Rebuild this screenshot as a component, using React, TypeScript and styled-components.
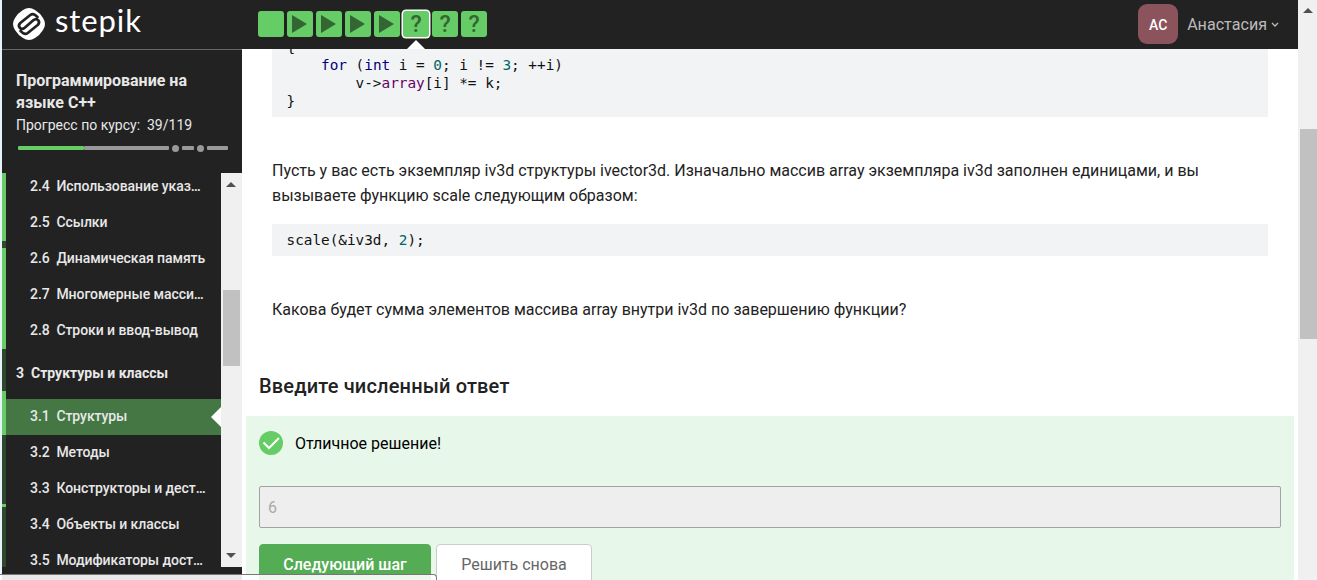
import React from 'react';
import styled, { createGlobalStyle } from 'styled-components';

const Global = createGlobalStyle`
  * { box-sizing: border-box; }
  body { margin: 0; overflow: hidden; font-family: Roboto, "Liberation Sans", sans-serif; color: #222; background: #fff; }
`;

const Page = styled.div`
  display: flex;
  width: 1317px;
  height: 580px;
  overflow: hidden;
  position: relative;
`;
const WindowEdge = styled.div`
  flex: 0 0 2px;
  background: #e9f1f9;
`;
const Shell = styled.div`
  flex: 0 0 1296px;
  display: flex;
  flex-direction: column;
  min-width: 0;
`;
const Header = styled.header`
  flex: 0 0 49px;
  display: flex;
  background: #222;
  padding-right: 19px;
`;
const Brand = styled.div`
  width: 256px;
  padding: 7px 0 0 10px;
  display: flex;
`;
const Wordmark = styled.span`
  font: 400 31px/31px Lato, sans-serif;
  color: #fff;
  margin: -2px 0 0 9px;
  letter-spacing: 0.9px;
`;
const Steps = styled.div`
  display: flex;
  gap: 3px;
  padding-top: 11px;
  flex: 1;
`;
const Step = styled.div<{ $active?: boolean }>`
  position: relative;
  width: 26px;
  height: 26px;
  border-radius: 3px;
  background: #66cc66;
  box-shadow: ${p => (p.$active ? '0 0 0 1.5px #fff' : 'none')};
  color: #336633;
  font: 500 23px/27px Roboto, sans-serif;
  text-align: center;
  svg { display: block; }
`;
const StepPointer = styled.i`
  position: absolute;
  left: 4px;
  top: 29px;
  border: 9px solid transparent;
  border-top: 0;
  border-bottom-color: #fff;
`;
const User = styled.div`
  display: flex;
  align-items: center;
  color: #bbb;
  font-size: 16.1px;
`;
const Avatar = styled.div`
  width: 40px;
  height: 40px;
  border-radius: 9px;
  background: #8b535c;
  color: #fff;
  font: 500 14px/42px Roboto, sans-serif;
  text-align: center;
  margin: -1px 9px 0 0;
`;
const Body = styled.div`
  flex: 1;
  display: flex;
  min-height: 0;
`;
const Sidebar = styled.aside`
  flex: 0 0 240px;
  background: #222;
  border-top: 1px solid #686868;
  color: #e8e8e8;
  display: flex;
  flex-direction: column;
`;
const Course = styled.div`
  flex: 0 0 123px;
  padding: 20px 14px 0;
`;
const CourseTitle = styled.div`
  font-size: 16px;
  font-weight: 700;
  line-height: 22px;
`;
const Progress = styled.div`
  font-size: 14px;
  line-height: 22px;
  white-space: pre;
`;
const Track = styled.div`
  display: flex;
  align-items: center;
  height: 8px;
  margin: 8px 0 0 2px;
`;
const Segment = styled.i<{ $w: number; $gap?: number; $done?: boolean; $dot?: boolean }>`
  width: ${p => p.$w}px;
  height: ${p => (p.$dot ? 7 : 4)}px;
  margin-left: ${p => p.$gap ?? 0}px;
  border-radius: ${p => (p.$dot ? '50%' : '1px')};
  background: ${p => (p.$done ? '#66cc66' : '#999')};
`;
const Contents = styled.div`
  flex: 0 0 394px;
  display: flex;
  overflow: hidden;
`;
const Rail = styled.div`
  flex: 0 0 4px;
  display: flex;
  flex-direction: column;
`;
const RailPart = styled.i<{ $h: number; $done?: boolean }>`
  flex: 0 0 ${p => p.$h}px;
  background: ${p => (p.$done ? '#66cc66' : '#2f472f')};
`;
const Lessons = styled.nav`
  flex: 1;
  margin-top: -4px;
  min-width: 0;
`;
const Lesson = styled.div<{ $active?: boolean }>`
  position: relative;
  height: 36px;
  padding-left: 24px;
  font-size: 14px;
  font-weight: 500;
  line-height: 34px;
  letter-spacing: -0.07px;
  white-space: pre;
  background: ${p => (p.$active ? '#447744' : 'transparent')};
`;
const LessonPointer = styled.i`
  position: absolute;
  right: 0;
  top: 8px;
  border: 10px solid transparent;
  border-left: 0;
  border-right-color: #fff;
`;
const Module = styled.div`
  height: 50px;
  padding-left: 10px;
  font-size: 14px;
  font-weight: 700;
  line-height: 48px;
  white-space: pre;
`;
const ScrollBar = styled.div<{ $w: number }>`
  flex: 0 0 ${p => p.$w}px;
  display: flex;
  flex-direction: column;
  background: #f0f0f0;
`;
const Thumb = styled.i<{ $top: number; $h: number; $right: number }>`
  height: ${p => p.$h}px;
  margin: ${p => p.$top}px ${p => p.$right}px 0 2px;
  background: #c1c1c1;
`;
const ScrollArrow = styled.svg<{ $top: number }>`
  display: block;
  flex: none;
  width: 10px;
  height: 5px;
  margin: ${p => p.$top}px 0 0 5px;
  fill: #505050;
`;
const Main = styled.main`
  flex: 1;
  min-width: 0;
  overflow: hidden;
`;
const Code = styled.pre<{ $first?: boolean }>`
  margin: ${p => (p.$first ? 0 : 16)}px 30px 0;
  padding: 0 14.5px;
  height: ${p => (p.$first ? 68 : 32)}px;
  background: #f2f3f5;
  overflow: hidden;
  color: #111;
  font: 14.35px/18px "DejaVu Sans Mono", monospace;
  > div { margin-top: ${p => (p.$first ? -11 : 7)}px; }
`;
const Keyword = styled.span`color: #000080;`;
const Num = styled.span`color: #006666;`;
const Type = styled.span`color: #660066;`;
const Text = styled.p`
  margin: 41px 30px 0;
  font-size: 16px;
  line-height: 25px;
  white-space: pre;
`;
const Heading = styled.h2`
  margin: 52px 17px 0;
  font-size: 20px;
  font-weight: 500;
  line-height: 24px;
  letter-spacing: 0.17px;
`;
const Answer = styled.section`
  margin: 18px 4px 0;
  height: 170px;
  padding: 15px 13px 0;
  background: #e7f7e9;
`;
const Verdict = styled.div`
  display: flex;
  align-items: center;
  gap: 12px;
  height: 24px;
  font-size: 16px;
  color: #000;
`;
const Field = styled.div`
  height: 42px;
  margin: 31px 0 16px;
  padding-left: 8px;
  border: 1px solid #a3a3a3;
  border-radius: 2px;
  background: #eee;
  color: #aaa;
  font-size: 16px;
  line-height: 41px;
`;
const Buttons = styled.div`
  display: flex;
  gap: 5px;
`;
const Button = styled.div<{ $primary?: boolean }>`
  width: ${p => (p.$primary ? 172 : 156)}px;
  height: 42px;
  border: 1px solid ${p => (p.$primary ? '#54ad54' : '#ccc')};
  border-radius: 4px;
  background: ${p => (p.$primary ? '#54ad54' : '#fff')};
  color: ${p => (p.$primary ? '#fff' : '#666')};
  font-size: 16px;
  font-weight: ${p => (p.$primary ? 500 : 400)};
  line-height: 40px;
  text-align: center;
`;
const StatusBubble = styled.div`
  position: absolute;
  left: 0;
  top: 574px;
  width: 437px;
  height: 10px;
  border: 1px solid #777;
  border-left: 0;
  border-radius: 0 4px 0 0;
  background: rgba(255, 255, 255, 0.9);
`;
const Caret = styled.svg`
  width: 8px;
  height: 6px;
  margin-left: 4px;
`;

const Logo = () => (
  <svg width="34" height="34" viewBox="0 0 34 34">
    <path d="M11 3Q17-1 23 3Q28 6 31 11Q35 17 31 23Q28 28 23 31Q17 35 11 31Q6 28 3 23Q-1 17 3 11Q6 6 11 3Z" fill="#fff" />
    <path
      d="M25.5 10 22.8 7.8Q20.5 6.3 18.3 8L8.3 16Q5.8 18.5 7.8 20.8Q10 23 12.7 20.7L21.3 13.3Q24 11 26.2 13.2Q28.2 15.5 25.7 18L15.7 26Q13.5 27.7 11.2 26.2L8.5 24"
      fill="none" stroke="#222" strokeWidth="2.7" strokeLinecap="round" strokeLinejoin="round"
    />
  </svg>
);
const Play = () => (
  <svg width="26" height="26"><path d="M5 4 20 13 5 22Z" fill="#336633" /></svg>
);

const before = ['2.4  Использование указ…', '2.5  Ссылки', '2.6  Динамическая память', '2.7  Многомерные масси…', '2.8  Строки и ввод-вывод'];
const after = ['3.2  Методы', '3.3  Конструкторы и дест…', '3.4  Объекты и классы', '3.5  Модификаторы дост…'];

export default function App() {
  return (
    <>
      <Global />
      <Page>
        <WindowEdge />
        <Shell>
          <Header>
            <Brand><Logo /><Wordmark>stepik</Wordmark></Brand>
            <Steps>
              <Step />
              {[0, 1, 2, 3].map(i => <Step key={i}><Play /></Step>)}
              <Step $active>?<StepPointer /></Step>
              <Step>?</Step>
              <Step>?</Step>
            </Steps>
            <User>
              <Avatar>АС</Avatar>Анастасия
              <Caret><path d="M1 1 4 4 7 1" fill="none" stroke="#bbb" strokeWidth="1.3" /></Caret>
            </User>
          </Header>
          <Body>
            <Sidebar>
              <Course>
                <CourseTitle>Программирование на<br />языке C++</CourseTitle>
                <Progress>Прогресс по курсу:  39/119</Progress>
                <Track>
                  <Segment $w={66} $done />
                  <Segment $w={85} />
                  <Segment $w={7} $gap={3} $dot />
                  <Segment $w={12} $gap={3} />
                  <Segment $w={7} $gap={3} $dot />
                  <Segment $w={21} $gap={3} />
                </Track>
              </Course>
              <Contents>
                <Rail>
                  <RailPart $h={68} $done />
                  <RailPart $h={7} />
                  <RailPart $h={101} $done />
                  <RailPart $h={42} />
                  <RailPart $h={44} $done />
                  <RailPart $h={69} />
                  <RailPart $h={3} $done />
                  <RailPart $h={60} />
                </Rail>
                <Lessons>
                  {before.map(t => <Lesson key={t}>{t}</Lesson>)}
                  <Module>3  Структуры и классы</Module>
                  <Lesson $active>3.1  Структуры<LessonPointer /></Lesson>
                  {after.map(t => <Lesson key={t}>{t}</Lesson>)}
                </Lessons>
                <ScrollBar $w={21}>
                  <ScrollArrow $top={9}><path d="M0 5 5 0 10 5Z" /></ScrollArrow>
                  <Thumb $top={103} $h={76} $right={2} />
                  <ScrollArrow $top={187}><path d="M0 0 5 5 10 0Z" /></ScrollArrow>
                </ScrollBar>
              </Contents>
            </Sidebar>
            <Main>
              <Code $first>
                <div>
                  {'{\n    '}<Keyword>for</Keyword>{' ('}<Keyword>int</Keyword>{' i = '}<Num>0</Num>{'; i != '}<Num>3</Num>{'; ++i)\n        v->'}<Type>array</Type>{'[i] *= k;\n}'}
                </div>
              </Code>
              <Text>
                {'Пусть у вас есть экземпляр iv3d структуры ivector3d. Изначально массив array экземпляра iv3d заполнен единицами, и вы\nвызываете функцию scale следующим образом:'}
              </Text>
              <Code><div>{'scale(&iv3d, '}<Num>2</Num>{');'}</div></Code>
              <Text>Какова будет сумма элементов массива array внутри iv3d по завершению функции?</Text>
              <Heading>Введите численный ответ</Heading>
              <Answer>
                <Verdict>
                  <svg width="24" height="24"><circle cx="12" cy="12" r="12" fill="#66cc66" /><path d="M4.5 11.5 10 17 20 7" fill="none" stroke="#fff" strokeWidth="2" /></svg>
                  Отличное решение!
                </Verdict>
                <Field>6</Field>
                <Buttons>
                  <Button $primary>Следующий шаг</Button>
                  <Button>Решить снова</Button>
                </Buttons>
              </Answer>
            </Main>
          </Body>
        </Shell>
        <ScrollBar $w={19}>
          <ScrollArrow $top={8}><path d="M0 5 5 0 10 5Z" /></ScrollArrow>
          <Thumb $top={116} $h={210} $right={0} />
        </ScrollBar>
        <StatusBubble />
      </Page>
    </>
  );
}
